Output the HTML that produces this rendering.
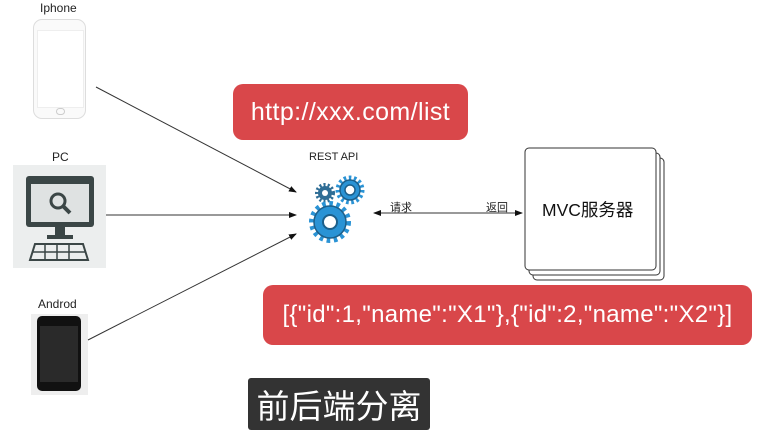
<!DOCTYPE html>
<html><head><meta charset="utf-8"><style>
body{margin:0;width:763px;height:430px;background:#fff;position:relative;overflow:hidden;font-family:"Liberation Sans","Noto Sans CJK SC",sans-serif}
.a{position:absolute}
.lbl{font-size:12px;color:#222}
.red{background:#d9474a;border-radius:10px;color:#fff;display:flex;align-items:center;justify-content:center}
</style></head><body>
<div class="a lbl" style="left:40px;top:1px">Iphone</div>
<div class="a" style="left:33px;top:19px;width:51px;height:98px;border:1.5px solid #ddd;border-radius:9px;background:#fafafa"></div>
<div class="a" style="left:37px;top:30px;width:45px;height:76px;background:#fff;border:1px solid #eee"></div>
<div class="a" style="left:56px;top:108px;width:7px;height:5px;border:1px solid #ccc;border-radius:4px"></div>
<div class="a lbl" style="left:52px;top:150px">PC</div>
<div class="a" style="left:13px;top:165px;width:93px;height:103px;background:#eceeee"></div>
<svg class="a" style="left:13px;top:165px" width="93" height="103">
<rect x="13" y="11" width="68" height="51" rx="3" fill="#3b4646"/>
<rect x="18" y="19" width="58" height="38" fill="#dfe2e2"/>
<circle cx="45" cy="36" r="7" fill="none" stroke="#3b4646" stroke-width="3"/>
<line x1="50" y1="41" x2="57" y2="48" stroke="#3b4646" stroke-width="4"/>
<rect x="42" y="62" width="10" height="8" fill="#3b4646"/><rect x="34" y="70" width="26" height="4" fill="#3b4646"/>
<path d="M22 79h48l5 16H17z" fill="none" stroke="#3b4646" stroke-width="2"/>
<path d="M20 87h53M32 79v16M44 79v16M56 79v16" stroke="#3b4646" stroke-width="1.5"/>
</svg>
<div class="a lbl" style="left:38px;top:297px">Androd</div>
<div class="a" style="left:31px;top:314px;width:57px;height:81px;background:#eee"></div>
<div class="a" style="left:37px;top:316px;width:44px;height:75px;background:#111;border-radius:5px"></div>
<div class="a" style="left:40px;top:326px;width:38px;height:56px;background:#2a2a2a"></div>
<svg class="a" style="left:0;top:0" width="763" height="430">
<defs><marker id="m" markerWidth="8" markerHeight="8" refX="7" refY="4" orient="auto"><path d="M0 1L8 4L0 7z" fill="#111"/></marker></defs>
<g stroke="#333" stroke-width="1">
<line x1="96" y1="87" x2="296" y2="192" marker-end="url(#m)"/>
<line x1="106" y1="215" x2="296" y2="215" marker-end="url(#m)"/>
<line x1="88" y1="340" x2="296" y2="234" marker-end="url(#m)"/>
<line x1="380" y1="213" x2="522" y2="213" marker-end="url(#m)"/>
<line x1="470" y1="213" x2="374" y2="213" marker-end="url(#m)"/>
</g>
<g fill="#2a93d5" stroke="#1d5f8a" stroke-width="1.5">
<circle cx="325" cy="193" r="8" stroke-dasharray="2 2" stroke-width="4" fill="none" stroke="#2e6d95"/>
<circle cx="325" cy="193" r="7" fill="#2e6d95" stroke="none"/><circle cx="325" cy="193" r="3" fill="#fff" stroke="none"/>
<circle cx="350" cy="190" r="12" stroke-dasharray="2.5 2.5" stroke-width="5" fill="none" stroke="#2a93d5"/>
<circle cx="350" cy="190" r="10" fill="#2a93d5" stroke="#1d5f8a"/><circle cx="350" cy="190" r="5" fill="#fff" stroke="#1d5f8a"/>
<circle cx="330" cy="222" r="18" stroke-dasharray="3.5 3.5" stroke-width="6" fill="none" stroke="#2a93d5"/>
<circle cx="330" cy="222" r="16" fill="#2a93d5" stroke="#1d5f8a"/><circle cx="330" cy="222" r="7" fill="#fff" stroke="#1d5f8a" stroke-width="2"/>
</g>
<rect x="533" y="158" width="131" height="122" rx="4" fill="#fff" stroke="#333"/>
<rect x="529" y="153" width="131" height="122" rx="4" fill="#fff" stroke="#333"/>
<rect x="525" y="148" width="131" height="122" rx="4" fill="#fff" stroke="#333"/>
</svg>
<div class="a" style="left:309px;top:151px;font-size:11px;color:#222">REST API</div>
<div class="a" style="left:390px;top:199px;font-size:11px;color:#222">请求</div>
<div class="a" style="left:486px;top:199px;font-size:11px;color:#222">返回</div>
<div class="a" style="left:542px;top:197px;font-size:17.5px;color:#111">MVC服务器</div>
<div class="a red" style="left:233px;top:84px;width:235px;height:56px;font-size:25px;letter-spacing:0.4px">http://xxx.com/list</div>
<div class="a red" style="left:263px;top:285px;width:489px;height:60px;font-size:24px;letter-spacing:0.3px">[{"id":1,"name":"X1"},{"id":2,"name":"X2"}]</div>
<div class="a" style="left:248px;top:378px;width:182px;height:52px;background:#333;border-radius:3px;color:#fff;font-size:33px;display:flex;align-items:center;justify-content:center">前后端分离</div>
</body></html>
